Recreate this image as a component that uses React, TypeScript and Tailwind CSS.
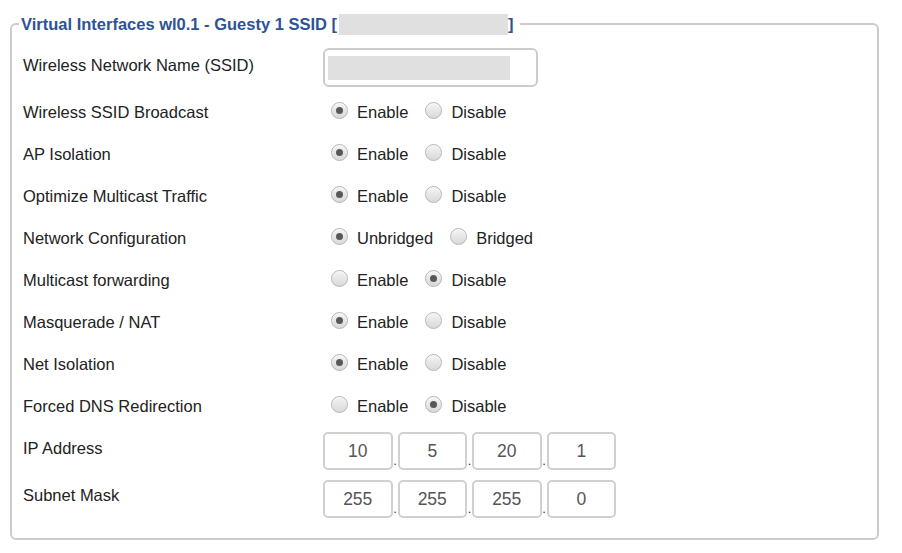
import React from 'react';

type RadioRow = {
  label: string;
  options: [string, string];
  selected: 0 | 1;
};

const radioRows: RadioRow[] = [
  { label: 'Wireless SSID Broadcast', options: ['Enable', 'Disable'], selected: 0 },
  { label: 'AP Isolation', options: ['Enable', 'Disable'], selected: 0 },
  { label: 'Optimize Multicast Traffic', options: ['Enable', 'Disable'], selected: 0 },
  { label: 'Network Configuration', options: ['Unbridged', 'Bridged'], selected: 0 },
  { label: 'Multicast forwarding', options: ['Enable', 'Disable'], selected: 1 },
  { label: 'Masquerade / NAT', options: ['Enable', 'Disable'], selected: 0 },
  { label: 'Net Isolation', options: ['Enable', 'Disable'], selected: 0 },
  { label: 'Forced DNS Redirection', options: ['Enable', 'Disable'], selected: 1 },
];

function Radio({ checked }: { checked: boolean }) {
  return (
    <span className="mb-[5px] flex h-[17px] w-[17px] shrink-0 items-center justify-center rounded-full border border-[#b5b5b5] bg-gradient-to-b from-[#f4f4f4] to-[#d9d9d9] shadow-[inset_0_1px_1px_rgba(255,255,255,0.8)]">
      {checked && <span className="h-[7px] w-[7px] rounded-full bg-[#585858]" />}
    </span>
  );
}

function Octets({ values }: { values: string[] }) {
  return (
    <div className="flex">
      {values.map((v, i) => (
        <React.Fragment key={i}>
          {i > 0 && (
            <span className="flex w-[5px] items-end justify-center pb-[3px] text-[13px] leading-none text-[#333]">.</span>
          )}
          <div className="flex h-[38px] w-[69.5px] items-center justify-center rounded-[5px] border-2 border-[#d0d0d0] text-[17.5px] text-[#555]">
            {v}
          </div>
        </React.Fragment>
      ))}
    </div>
  );
}

export default function App() {
  return (
    <div className="h-[553px] w-[902px] bg-white font-['Liberation_Sans',Arial,sans-serif] text-[16.5px] text-[#222]">
      <fieldset className="ml-[10px] mt-[12px] w-[869px] rounded-[6px] border-2 border-[#cccccc] px-[11px] pb-[20px]">
        <legend className="-ml-[4px] pl-[2px] pr-[6px] text-[16.5px] font-bold leading-[24px] text-[#2d5395]">
          Virtual Interfaces wl0.1 - Guesty 1 SSID [
          <span className="ml-[2px] inline-block h-[21px] w-[169px] bg-[#e0e0e0] align-[-5px]" />]
        </legend>

        {/* SSID */}
        <div className="flex items-center pt-[12px] pb-[4px]">
          <span className="w-[300px] pb-[5px]">Wireless Network Name (SSID)</span>
          <div className="flex h-[39px] w-[215px] items-center rounded-[6px] border-2 border-[#cccccc] pl-[3px]">
            <div className="h-[24px] w-[182px] bg-[#e0e0e0]" />
          </div>
        </div>

        {radioRows.map((row) => (
          <div key={row.label} className="flex h-[42px] items-center pt-[1px]">
            <span className="w-[300px]">{row.label}</span>
            <div className="flex items-center pl-[8px]">
              <Radio checked={row.selected === 0} />
              <span className="ml-[9px]">{row.options[0]}</span>
              <span className="ml-[17px]">
                <Radio checked={row.selected === 1} />
              </span>
              <span className="ml-[9px]">{row.options[1]}</span>
            </div>
          </div>
        ))}

        <div className="flex flex-col gap-[10px] pt-[5px]">
          <div className="flex items-center">
            <span className="w-[300px] pb-[6px]">IP Address</span>
            <Octets values={['10', '5', '20', '1']} />
          </div>
          <div className="flex items-center">
            <span className="w-[300px] pb-[8px]">Subnet Mask</span>
            <Octets values={['255', '255', '255', '0']} />
          </div>
        </div>
      </fieldset>
    </div>
  );
}
